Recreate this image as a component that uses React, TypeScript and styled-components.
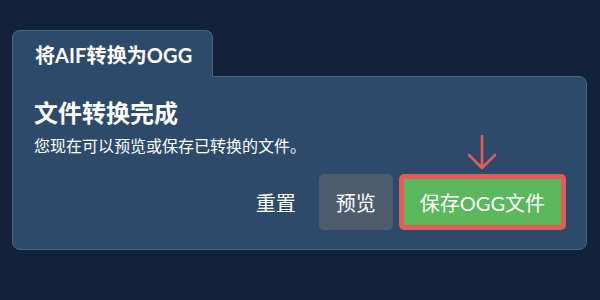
import React from 'react';
import styled, { createGlobalStyle } from 'styled-components';

const GlobalStyle = createGlobalStyle`
  html, body {
    margin: 0;
    padding: 0;
    background: #11223a;
  }
  body {
    font-family: 'Lato', 'Noto Sans CJK SC', sans-serif;
    color: #ffffff;
  }
`;

const App = () => {
  return (
    <>
      <GlobalStyle />
      <Page>
        <Converter>
          <Tab>将AIF转换为OGG</Tab>
          <Panel>
            <Heading>文件转换完成</Heading>
            <Message>您现在可以预览或保存已转换的文件。</Message>
            <Actions>
              <Button variant="plain">重置</Button>
              <Button variant="muted">预览</Button>
              <SaveWrap>
                <Arrow width="30" height="36" viewBox="0 0 30 36">
                  <path
                    d="M15 1 V33 M2 20 L15 33 L28 20"
                    fill="none"
                    stroke="#e05d5b"
                    strokeWidth="2.6"
                    strokeLinecap="round"
                    strokeLinejoin="round"
                  />
                </Arrow>
                <Button variant="save">保存OGG文件</Button>
              </SaveWrap>
            </Actions>
          </Panel>
        </Converter>
      </Page>
    </>
  );
};

export default App;

const Page = styled.div`
  width: 600px;
  height: 300px;
  padding: 30px 0 0 12px;
  box-sizing: border-box;
`;

const Converter = styled.div`
  width: 575px;
  display: flex;
  flex-direction: column;
  align-items: flex-start;
`;

const Tab = styled.div`
  width: 201px;
  height: 47px;
  box-sizing: border-box;
  padding: 0 0 0 22px;
  margin-bottom: -1px;
  display: flex;
  align-items: center;
  background: #2d4a6a;
  border: 1px solid #4b6684;
  border-bottom: none;
  border-radius: 8px 8px 0 0;
  font-size: 20px;
  font-weight: 700;
  letter-spacing: 0.1px;
  position: relative;
  z-index: 1;
`;

const Panel = styled.div`
  width: 100%;
  box-sizing: border-box;
  padding: 20px 20px 19px 21px;
  background: #2d4a6a;
  border: 1px solid #4b6684;
  border-radius: 0 8px 8px 8px;
`;

const Heading = styled.h2`
  margin: 0;
  font-size: 24px;
  line-height: 31px;
  font-weight: 700;
`;

const Message = styled.p`
  margin: 6px 0 0;
  font-size: 16px;
  line-height: 24px;
`;

const Actions = styled.div`
  margin-top: 16px;
  display: flex;
  justify-content: flex-end;
  align-items: center;
  gap: 6px;
`;

const SaveWrap = styled.div`
  position: relative;
  display: flex;
`;

const Arrow = styled.svg`
  position: absolute;
  left: 50%;
  top: -39px;
  transform: translateX(-50%);
`;

type Variant = 'plain' | 'muted' | 'save';

const Button = styled.button<{ variant: Variant }>`
  height: 56px;
  box-sizing: border-box;
  padding: 0 ${({ variant }) => (variant === 'save' ? '16px' : '17px')};
  font-family: 'Lato', 'Noto Sans CJK SC', sans-serif;
  font-size: 20px;
  color: #ffffff;
  cursor: pointer;
  border-radius: 5px;
  border: ${({ variant }) => (variant === 'save' ? '5px solid #e05d5b' : 'none')};
  background: ${({ variant }) =>
    variant === 'save' ? '#5cb85c' : variant === 'muted' ? '#4e5d6e' : 'transparent'};
`;
